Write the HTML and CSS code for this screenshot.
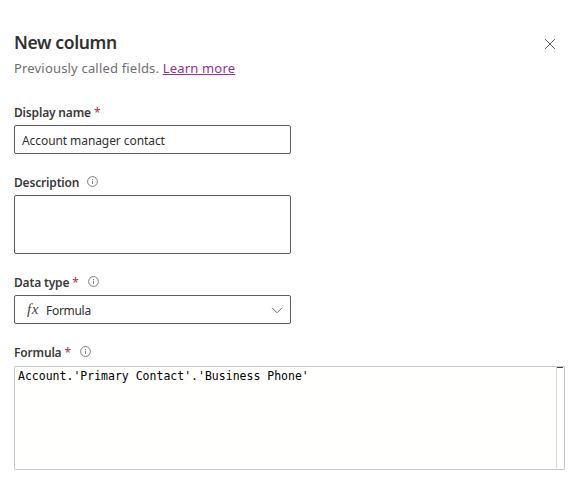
FILE: index.html
```html
<!DOCTYPE html>
<html lang="en">
<head>
<meta charset="utf-8">
<title>New column</title>
<link rel="stylesheet" href="styles.css">
</head>
<body>
<main class="panel">
  <header class="header">
    <div>
      <h1 class="title">New column</h1>
      <p class="subtitle"><span class="note">Previously called fields.</span> <a class="link" href="#">Learn more</a></p>
    </div>
    <svg class="close" width="12" height="12" viewBox="0 0 12 12"><path d="M1 1l10 10M11 1L1 11"/></svg>
  </header>

  <section class="field">
    <div class="label"><span>Display name</span><span class="req">*</span></div>
    <div class="box"><span>Account manager contact</span></div>
  </section>

  <section class="field">
    <div class="label"><span>Description</span><svg class="info" width="11" height="11" viewBox="0 0 11 11"><circle cx="5.5" cy="5.5" r="4.9"/><path d="M5.5 4.8v3.2M5.5 3v1"/></svg></div>
    <div class="box area"></div>
  </section>

  <section class="field">
    <div class="label"><span>Data type</span><span class="req">*</span><svg class="info" width="11" height="11" viewBox="0 0 11 11"><circle cx="5.5" cy="5.5" r="4.9"/><path d="M5.5 4.8v3.2M5.5 3v1"/></svg></div>
    <div class="box select"><span class="fx">fx</span><span>Formula</span><svg class="chevron" width="12" height="7" viewBox="0 0 12 7"><path d="M1 .8l5 5 5-5"/></svg></div>
  </section>

  <section class="field">
    <div class="label formula-label"><span>Formula</span><span class="req">*</span><svg class="info" width="11" height="11" viewBox="0 0 11 11"><circle cx="5.5" cy="5.5" r="4.9"/><path d="M5.5 4.8v3.2M5.5 3v1"/></svg></div>
    <div class="editor"><code class="code">Account.'Primary Contact'.'Business Phone'</code><div class="ruler"></div></div>
  </section>
</main>
</body>
</html>
```
FILE: styles.css
```css
* { box-sizing: border-box; }
body {
  margin: 0;
  background: #fff;
  color: #323130;
  font-family: "Noto Sans", "Open Sans", sans-serif;
  overflow: hidden;
}
.panel { padding: 30px 5px 0 14px; }
.header {
  display: flex;
  justify-content: space-between;
  height: 74px;
}
.title {
  margin: 0;
  font-size: 17.5px;
  line-height: 25px;
  font-weight: 600;
  letter-spacing: -.37px;
}
.subtitle {
  margin: 3px 0 0;
  font-size: 13px;
  line-height: 20px;
  letter-spacing: .18px;
  color: #706e6c;
  white-space: nowrap;
}
.link { color: #962d97; text-decoration: underline; }
.close {
  margin: 8px 9px 0 0;
  fill: none;
  stroke: #605e5c;
  stroke-width: 1;
}
.field { margin-bottom: 20px; }
.label {
  display: flex;
  align-items: center;
  height: 21px;
  padding-bottom: 3px;
  font-size: 12px;
  line-height: 16px;
  font-weight: 600;
  letter-spacing: -.17px;
  color: #3b3a39;
  white-space: nowrap;
}
.formula-label { height: 22px; padding-bottom: 4px; }
.req { margin-left: 3px; color: #b5313a; font-size: 12px; font-weight: 400; }
.info {
  margin: -3px 0 0 8px;
  fill: none;
  stroke: #605e5c;
  stroke-width: .8;
}
.req + .info { margin-left: 9px; }
.box {
  display: flex;
  align-items: center;
  width: 277px;
  height: 29px;
  padding: 2px 7px 0;
  border: 1px solid #605e5c;
  border-radius: 2px;
  font-size: 12px;
  letter-spacing: -.08px;
  white-space: nowrap;
}
.area { height: 59px; }
.select { padding: 1px 7px 0 12px; letter-spacing: -.3px; }
.fx {
  width: 19px;
  color: #484644;
  font-family: "Liberation Serif", serif;
  font-style: italic;
  font-size: 15px;
  line-height: 16px;
  letter-spacing: .5px;
  margin-top: -2px;
}
.chevron {
  margin-left: auto;
  fill: none;
  stroke: #706e6c;
  stroke-width: 1;
}
.editor {
  display: flex;
  justify-content: space-between;
  width: 551px;
  height: 104px;
  border: 1px solid #c8c8c8;
  border-radius: 1px;
  background: #fffffe;
}
.code {
  padding: 1px 0 0 3px;
  color: #000;
  font-family: "DejaVu Sans Mono", monospace;
  font-size: 11.5px;
  line-height: 17px;
  white-space: pre;
}
.ruler {
  width: 8px;
  height: 101px;
  border-left: 1px solid #d8d8d8;
  background: linear-gradient(#424242, #424242) 0 0 / 6px 1px no-repeat;
}
```
